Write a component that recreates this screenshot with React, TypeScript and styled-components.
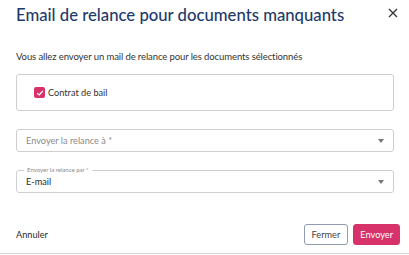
import styled, { createGlobalStyle } from "styled-components";

const GlobalStyle = createGlobalStyle`
  *, *::before, *::after {
    box-sizing: border-box;
  }
  html, body {
    margin: 0;
    padding: 0;
    background: #ffffff;
  }
  body {
    font-family: Lato, "Open Sans", sans-serif;
    color: #2b2b2b;
  }
`;

const Dialog = styled.div`
  width: 409px;
  height: 254px;
  border-bottom: 1px solid #d4d4d4;
  padding: 0 9px 0 16px;
  display: flex;
  flex-direction: column;
`;

const Header = styled.header`
  display: flex;
  justify-content: space-between;
  align-items: flex-start;
  height: 50px;
  padding-top: 3px;
`;

const Title = styled.h1`
  margin: 0;
  font-family: Lato, sans-serif;
  font-weight: 500;
  font-size: 16.7px;
  line-height: 24px;
  color: #1e3a6a;
  white-space: nowrap;
`;

const CloseButton = styled.button`
  border: none;
  background: none;
  padding: 0;
  margin: 5px 0 0 0;
  width: 12px;
  height: 12px;
  cursor: pointer;
  display: flex;
`;

const Intro = styled.p`
  margin: 0;
  font-size: 9.5px;
  line-height: 14px;
  letter-spacing: -0.1px;
  color: #333;
`;

const Card = styled.div`
  margin: 10px 6px 0 0;
  height: 37px;
  border: 1px solid #cfcfcf;
  border-radius: 3px;
  display: flex;
  align-items: center;
  padding-left: 17px;
`;

const CheckRow = styled.label`
  display: flex;
  align-items: center;
  gap: 3px;
  font-size: 9.2px;
  color: #333;
`;

const Box = styled.span`
  width: 11px;
  height: 11px;
  border-radius: 2px;
  background: #d7336a;
  display: flex;
  align-items: center;
  justify-content: center;
`;

const Field = styled.div`
  position: relative;
  margin: 18px 6px 0 0;
  height: 23px;
  border: 1px solid #cfcfcf;
  border-radius: 3px;
  display: flex;
  align-items: center;
  justify-content: space-between;
  padding: 0 9px 0 9px;
`;

const FieldText = styled.span<{ $muted?: boolean }>`
  font-size: 9.2px;
  color: ${(p) => (p.$muted ? "#8a8a8a" : "#2b2b2b")};
`;

const Legend = styled.span`
  position: absolute;
  left: 7px;
  top: -5px;
  padding: 0 3px;
  background: #fff;
  font-size: 6px;
  line-height: 8px;
  color: #8a8a8a;
`;

const Caret = styled.span`
  width: 0;
  height: 0;
  border-left: 3.5px solid transparent;
  border-right: 3.5px solid transparent;
  border-top: 4px solid #777;
`;

const Footer = styled.footer`
  margin-top: auto;
  margin-bottom: 8px;
  display: flex;
  align-items: center;
  justify-content: space-between;
`;

const TextButton = styled.button`
  border: none;
  background: none;
  padding: 0;
  font-family: inherit;
  font-size: 9.2px;
  color: #2b2b2b;
`;

const Actions = styled.div`
  display: flex;
  gap: 5px;
`;

const Button = styled.button<{ $primary?: boolean }>`
  height: 21px;
  padding: 0 ${(p) => (p.$primary ? 6 : 7)}px;
  border-radius: 3px;
  font-family: inherit;
  font-size: 9.2px;
  border: 1px solid ${(p) => (p.$primary ? "#d7336a" : "#8e9bb3")};
  background: ${(p) => (p.$primary ? "#d7336a" : "#fff")};
  color: ${(p) => (p.$primary ? "#fff" : "#444")};
`;

export default function App() {
  return (
    <>
      <GlobalStyle />
      <Dialog>
        <Header>
          <Title>Email de relance pour documents manquants</Title>
          <CloseButton aria-label="Fermer">
            <svg width="10" height="10" viewBox="0 0 10 10">
              <path d="M1 1L9 9M9 1L1 9" stroke="#333" strokeWidth="1.3" />
            </svg>
          </CloseButton>
        </Header>
        <Intro>Vous allez envoyer un mail de relance pour les documents sélectionnés</Intro>
        <Card>
          <CheckRow>
            <Box>
              <svg width="8" height="8" viewBox="0 0 8 8">
                <path d="M1.2 4.2L3.2 6L6.8 2" stroke="#fff" strokeWidth="1.2" fill="none" />
              </svg>
            </Box>
            Contrat de bail
          </CheckRow>
        </Card>
        <Field>
          <FieldText $muted>Envoyer la relance à *</FieldText>
          <Caret />
        </Field>
        <Field>
          <Legend>Envoyer la relance par *</Legend>
          <FieldText>E-mail</FieldText>
          <Caret />
        </Field>
        <Footer>
          <TextButton>Annuler</TextButton>
          <Actions>
            <Button>Fermer</Button>
            <Button $primary>Envoyer</Button>
          </Actions>
        </Footer>
      </Dialog>
    </>
  );
}
